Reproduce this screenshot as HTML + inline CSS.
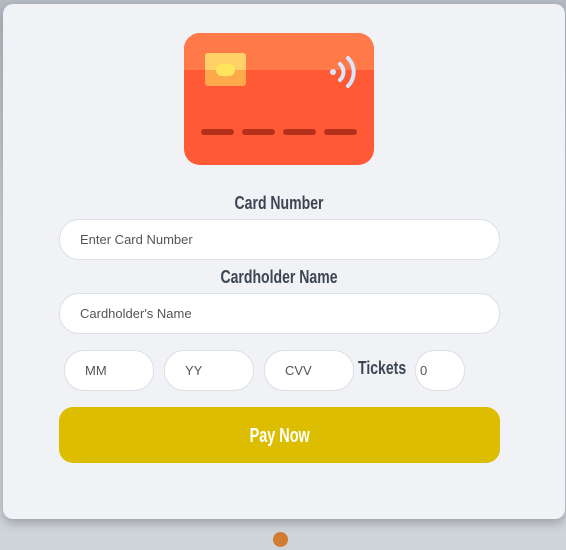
<!DOCTYPE html>
<html><head><style>
*{box-sizing:border-box;margin:0;padding:0}
body{width:566px;height:550px;background:linear-gradient(#b3bac2,#cdd2d9 40%,#cfd4da);position:relative;overflow:hidden;font-family:"Liberation Sans",sans-serif}
.card{position:absolute;left:3px;top:4px;width:562px;height:515px;background:#f0f2f5;border-radius:10px;box-shadow:0 4px 10px rgba(0,0,0,.25)}
.lbl{position:absolute;font-weight:bold;color:#3d4654;font-size:18px;transform:scaleX(.78);white-space:nowrap}
.in{position:absolute;background:#fff;border:1px solid #dcdfe4;border-radius:20px;height:41px;font-size:13px;color:#555;padding-left:20px;line-height:39px}
.btn{position:absolute;left:59px;top:407px;width:441px;height:56px;background:#dcbd00;border-radius:14px;color:#fff;font-size:20px;font-weight:bold;text-align:center;line-height:58px}
.btn span{display:inline-block;transform:scaleX(.72)}
.dot{position:absolute;left:273px;top:532px;width:15px;height:15px;border-radius:50%;background:#d07c32}
</style></head><body>
<div class="card"></div>
<svg style="position:absolute;left:184px;top:33px" width="190" height="132" viewBox="0 0 190 132">
<defs><clipPath id="c"><rect width="190" height="132" rx="16"/></clipPath></defs>
<g clip-path="url(#c)">
<rect width="190" height="132" fill="#ff5936"/>
<rect width="190" height="37" fill="#ff7a48"/>
</g>
<rect x="21" y="20" width="41" height="33" rx="3" fill="#ffa94d"/>
<path d="M24 20h35a3 3 0 0 1 3 3v14H21V23a3 3 0 0 1 3-3z" fill="#ffd166"/>
<rect x="32" y="31" width="19" height="12" rx="6" fill="#ffe45e"/>
<circle cx="149" cy="39" r="3" fill="#d6e6fb"/>
<path d="M156 31a11 11 0 0 1 0 16" stroke="#d6e6fb" stroke-width="4" fill="none" stroke-linecap="round"/>
<path d="M164 25a20 20 0 0 1 0 28" stroke="#d6e6fb" stroke-width="4" fill="none" stroke-linecap="round"/>
<g stroke="#b5301a" stroke-width="6" stroke-linecap="round">
<line x1="20" y1="99" x2="47" y2="99"/><line x1="61" y1="99" x2="88" y2="99"/><line x1="102" y1="99" x2="129" y2="99"/><line x1="143" y1="99" x2="170" y2="99"/></g>
</svg>
<div class="lbl" style="left:0;width:558px;text-align:center;top:193px">Card Number</div>
<div class="in" style="left:59px;top:219px;width:441px">Enter Card Number</div>
<div class="lbl" style="left:0;width:558px;text-align:center;top:267px">Cardholder Name</div>
<div class="in" style="left:59px;top:293px;width:441px">Cardholder's Name</div>
<div class="in" style="left:64px;top:350px;width:90px">MM</div>
<div class="in" style="left:164px;top:350px;width:90px">YY</div>
<div class="in" style="left:264px;top:350px;width:90px">CVV</div>
<div class="lbl" style="left:358px;top:358px;transform-origin:left">Tickets</div>
<div class="in" style="left:415px;top:350px;width:50px;padding-left:4px">0</div>
<div class="btn"><span>Pay Now</span></div>
<div class="dot"></div>
</body></html>
